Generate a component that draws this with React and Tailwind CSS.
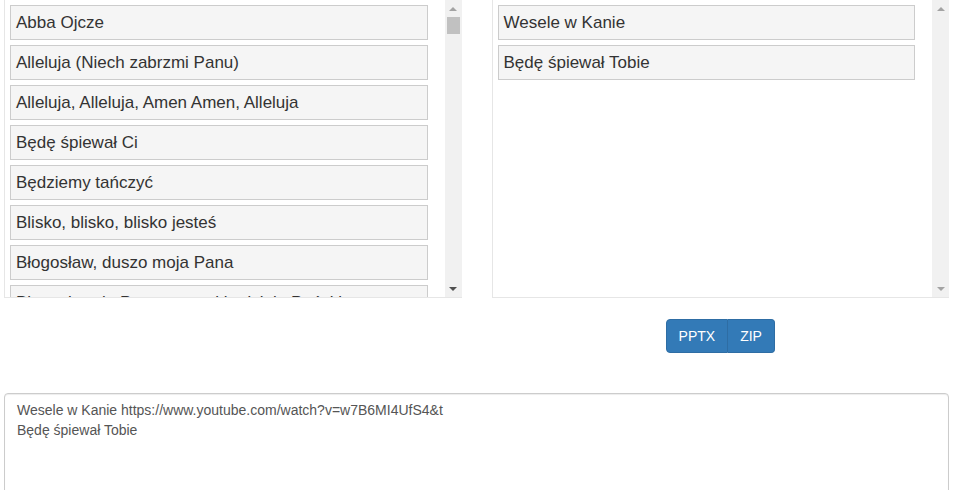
import React from "react";

const songs = [
    "Abba Ojcze",
    "Alleluja (Niech zabrzmi Panu)",
    "Alleluja, Alleluja, Amen Amen, Alleluja",
    "Będę śpiewał Ci",
    "Będziemy tańczyć",
    "Blisko, blisko, blisko jesteś",
    "Błogosław, duszo moja Pana",
    "Błogosławcie Pana wszystkie dzieła Pańskie",
];

const selected = ["Wesele w Kanie", "Będę śpiewał Tobie"];

function Scrollbar({ canScroll }) {
    return (
        <div className="w-[17px] shrink-0 bg-[#f1f1f1] flex flex-col items-center">
            <div className="h-[17px] flex items-center justify-center">
                <div className="w-0 h-0 border-l-[4px] border-r-[4px] border-b-[4px] border-l-transparent border-r-transparent border-b-[#a3a3a3]"></div>
            </div>
            {canScroll ? (
                <div className="w-[13px] h-[17px] bg-[#c1c1c1]"></div>
            ) : null}
            <div className="flex-1"></div>
            <div className="h-[17px] flex items-center justify-center">
                <div
                    className={
                        canScroll
                            ? "w-0 h-0 border-l-[4px] border-r-[4px] border-t-[4px] border-l-transparent border-r-transparent border-t-[#505050]"
                            : "w-0 h-0 border-l-[4px] border-r-[4px] border-t-[4px] border-l-transparent border-r-transparent border-t-[#a3a3a3]"
                    }
                ></div>
            </div>
        </div>
    );
}

function SongList({ items, canScroll }) {
    return (
        <div className="w-full h-[298px] shrink-0 flex border-l border-b border-[#e6e6e6] bg-white overflow-hidden">
            <div className="flex-1 min-w-0 overflow-hidden pl-[5px] pr-[17px] pt-[5px] flex flex-col gap-[5px]">
                {items.map((name, index) => (
                    <div
                        key={index}
                        className="h-[35px] shrink-0 flex items-center px-[5px] bg-[#f5f5f5] border border-[#cccccc] text-[17px] text-[#333333] whitespace-nowrap overflow-hidden"
                    >
                        {name}
                    </div>
                ))}
            </div>
            <Scrollbar canScroll={canScroll} />
        </div>
    );
}

export default function App() {
    return (
        <div
            className="w-full h-[490px] overflow-hidden bg-white px-[4px]"
            style={{ fontFamily: '"Liberation Sans", Arial, sans-serif' }}
        >
            <div className="flex items-start gap-[30px]">
                <div className="flex-1 min-w-0">
                    <SongList items={songs} canScroll={true} />
                </div>
                <div className="flex-1 min-w-0 flex flex-col">
                    <SongList items={selected} canScroll={false} />
                    <div className="flex justify-center mt-[21px]">
                        <div className="flex">
                            <button
                                type="button"
                                className="h-[34px] px-[12px] text-[14px] text-white bg-[#337ab7] border border-[#2e6da4] rounded-l-[4px]"
                            >
                                PPTX
                            </button>
                            <button
                                type="button"
                                className="h-[34px] px-[12px] text-[14px] text-white bg-[#337ab7] border border-[#2e6da4] border-l-0 rounded-r-[4px]"
                            >
                                ZIP
                            </button>
                        </div>
                    </div>
                </div>
            </div>
            <textarea
                readOnly
                className="block w-full h-[150px] mt-[40px] px-[12px] py-[6px] text-[14px] leading-[20px] text-[#555555] border border-[#cccccc] rounded-[4px] shadow-[inset_0_1px_1px_rgba(0,0,0,0.075)] resize-none outline-none"
                value={
                    "Wesele w Kanie https://www.youtube.com/watch?v=w7B6MI4UfS4&t\nBędę śpiewał Tobie"
                }
            ></textarea>
        </div>
    );
}
